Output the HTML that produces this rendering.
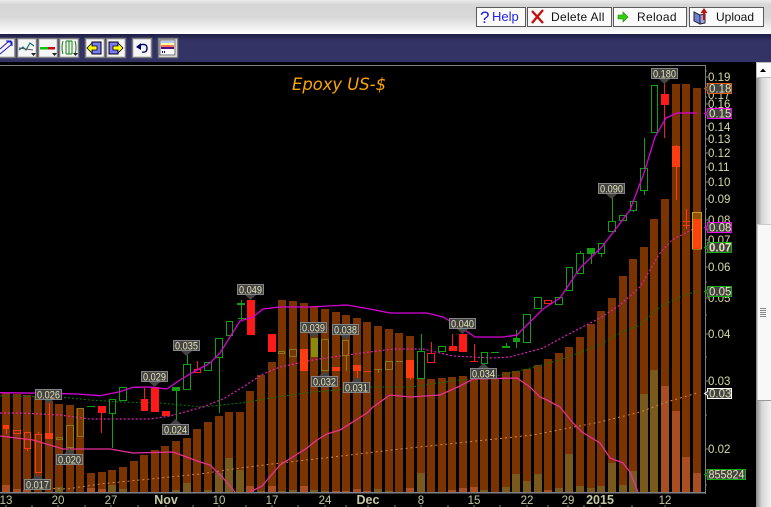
<!DOCTYPE html>
<html><head><meta charset="utf-8"><style>
html,body{margin:0;padding:0;background:#000;overflow:hidden}
svg{display:block}
text{font-family:"Liberation Sans",sans-serif}
.ax{font-size:11.500px;fill:#d8d8a4}
.dt{font-size:11.500px;fill:#c8c8a0;text-anchor:middle}
.db{font-size:12.500px;font-weight:bold;fill:#c8c8a0;text-anchor:middle}
.lb{font-size:11px;fill:#e4e4b8;text-anchor:middle}
.lbg{fill:#444;stroke:#858585;stroke-width:1}
.ptr{fill:#444}
.tg{fill:#444;stroke-width:1}
.tt{font-size:11.500px;fill:#e4e4b8}
.btn{font-size:12px;fill:#111}
.cr{shape-rendering:crispEdges}
</style></head><body>
<svg width="771" height="507" viewBox="0 0 771 507" xmlns="http://www.w3.org/2000/svg">
<defs>
<linearGradient id="top" x1="0" y1="0" x2="0" y2="1"><stop offset="0" stop-color="#ececec"/><stop offset=".14" stop-color="#d6d6d6"/><stop offset=".5" stop-color="#d8d8d8"/><stop offset="1" stop-color="#ffffff"/></linearGradient>
<linearGradient id="nav" x1="0" y1="0" x2="0" y2="1"><stop offset="0" stop-color="#1e1e44"/><stop offset=".25" stop-color="#333366"/><stop offset="1" stop-color="#333366"/></linearGradient>
<linearGradient id="trk" x1="0" y1="0" x2="1" y2="0"><stop offset="0" stop-color="#8a8a8a"/><stop offset=".4" stop-color="#d8d8d8"/><stop offset="1" stop-color="#f2f2f2"/></linearGradient>
</defs>
<rect width="771" height="507" fill="#000"/>
<rect width="771" height="34" fill="url(#top)"/>
<rect y="34" width="771" height="28" fill="url(#nav)"/>

<!-- top buttons -->
<g fill="#fbfbfb" stroke="#5a5a5a">
<rect x="476.500" y="7.500" width="49" height="19"/>
<rect x="527.500" y="7.500" width="84" height="19"/>
<rect x="613.500" y="7.500" width="73" height="19"/>
<rect x="689.500" y="7.500" width="74" height="19"/>
</g>
<text x="480" y="23" style="font-size:17px" fill="#1a1ae0">?</text>
<text x="492" y="21" style="font-size:13px" fill="#2222ee">Help</text>
<path d="M532 11L543 23M543 10L532 23" stroke="#c01010" stroke-width="2.400" fill="none"/>
<text x="551" y="21" class="btn" style="letter-spacing:.3px">Delete All</text>
<path d="M618 15h5v-3l5 5-5 5v-3h-5z" fill="#30d010" stroke="#208010" stroke-width=".6"/>
<text x="637" y="21" class="btn" style="letter-spacing:.3px">Reload</text>
<path d="M694 12l6 3v9l-6-3z" fill="#7080d0" stroke="#223" stroke-width="1"/><path d="M700 15l5-1v9l-5 1z" fill="#9aa4e0" stroke="#223" stroke-width="1"/>
<path d="M703 20v-7h-2.500l3.500-5 3.500 5H705v7z" fill="#c01010"/>
<text x="716" y="21" class="btn">Upload</text>

<!-- toolbar -->
<g fill="#f6f6f6" stroke="#7c7c7c" stroke-width="1.500">
<rect x="-4" y="38.500" width="19" height="19"/>
<rect x="17.500" y="38.500" width="19" height="19"/>
<rect x="38.500" y="38.500" width="19" height="19"/>
<rect x="59.500" y="38.500" width="19" height="19"/>
<rect x="85.500" y="38.500" width="19" height="19"/>
<rect x="106.500" y="38.500" width="19" height="19"/>
<rect x="132.500" y="38.500" width="19" height="19"/>
<rect x="158.500" y="38.500" width="19" height="19"/>
</g>
<path d="M0 49L9 41M6 41h5v4M0 54L12 44M8 42h4v4" stroke="#1818c0" fill="none"/>
<path d="M19 50l4-3 3 3 4-7 4 3" stroke="#1a7070" fill="none" stroke-width="1.200"/><path d="M19 48l14 2" stroke="#555" fill="none"/>
<path d="M31 53h5l-2.500 3z" fill="#222"/>
<rect x="40" y="47" width="8" height="2.500" fill="#10c010"/><rect x="48" y="47" width="7" height="2.500" fill="#c01010"/>
<path d="M52 53h5l-2.500 3z" fill="#222"/>
<path d="M63 41q-2 7 0 13M75 41q2 7 0 13M66 41v13M72 41v13M66 41h6M66 54h6M69 41v13" stroke="#128012" fill="none"/>
<path d="M73 53h5l-2.500 3z" fill="#222"/>
<rect x="92" y="42" width="9" height="12" fill="#7a7aff" stroke="#000"/>
<path d="M87 48l5-5v3h5v4h-5v3z" fill="#ffff00" stroke="#000" stroke-width=".8"/>
<rect x="109" y="42" width="9" height="12" fill="#7a7aff" stroke="#000"/>
<path d="M123 48l-5-5v3h-5v4h5v3z" fill="#ffff00" stroke="#000" stroke-width=".8"/>
<path d="M140 45q7-2 7 3t-5 4" stroke="#000066" stroke-width="1.400" fill="none"/><path d="M136 47l5-4v7z" fill="#000066"/>
<rect x="160" y="40" width="15" height="15" fill="#fff" stroke="#666"/>
<rect x="161" y="41" width="13" height="2" fill="#b8c8ff"/><rect x="161" y="43" width="13" height="2" fill="#ffffa0"/><rect x="161" y="45" width="13" height="2" fill="#ff7050"/><rect x="161" y="47" width="13" height="2" fill="#501080"/>
<rect x="162" y="51" width="1" height="2" fill="#00a"/><rect x="164" y="51" width="1" height="2" fill="#00a"/>

<!-- chart frame -->
<rect x="0" y="65" width="705" height="1" fill="#808080"/>

<!-- bars -->
<path fill="#7b3300" d="M2 393h8V492h-8zM13 394h8V492h-8zM23 395h8V492h-8zM34 396h8V492h-8zM45 401h8V492h-8zM55 404h8V492h-8zM66 405h8V492h-8zM76 408h8V492h-8zM87 473h8V492h-8zM98 472h8V492h-8zM108 470h8V492h-8zM119 467h8V492h-8zM130 461h8V492h-8zM140 455h8V492h-8zM151 450h8V492h-8zM161 446h8V492h-8zM172 441h8V492h-8zM183 438h8V492h-8zM193 429h8V492h-8zM204 422h8V492h-8zM215 416h8V492h-8zM225 412h8V492h-8zM236 412h8V492h-8zM246 391h8V492h-8zM257 375h8V492h-8zM268 362h8V492h-8zM278 300h8V492h-8zM289 301h8V492h-8zM300 303h8V492h-8zM310 306h8V492h-8zM321 309h8V492h-8zM332 312h8V492h-8zM342 315h8V492h-8zM353 318h8V492h-8zM363 322h8V492h-8zM374 326h8V492h-8zM385 329h8V492h-8zM395 333h8V492h-8zM406 336h8V492h-8zM417 379h8V492h-8zM427 379h8V492h-8zM438 378h8V492h-8zM448 377h8V492h-8zM459 376h8V492h-8zM470 378h8V492h-8zM480 378h8V492h-8zM491 378h8V492h-8zM502 372h8V492h-8zM512 371h8V492h-8zM523 369h8V492h-8zM534 365h8V492h-8zM544 359h8V492h-8zM555 353h8V492h-8zM565 347h8V492h-8zM576 337h8V492h-8zM587 324h8V492h-8zM597 311h8V492h-8zM608 298h8V492h-8zM619 276h8V492h-8zM629 259h8V492h-8zM640 247h8V492h-8zM650 219h8V492h-8zM661 199h8V492h-8zM672 84h8V492h-8zM682 84h8V492h-8zM693 88h8V492h-8z"/>
<!-- volume olive -->
<path fill="#7a5a1c" d="M55 487h8V492h-8zM108 485h8V492h-8zM119 489h8V492h-8zM172 490h8V492h-8zM183 483h8V492h-8zM204 490h8V492h-8zM215 473h8V492h-8zM225 458h8V492h-8zM236 470h8V492h-8zM257 491h8V492h-8zM278 491h8V492h-8zM289 490h8V492h-8zM310 490h8V492h-8zM321 491h8V492h-8zM374 489h8V492h-8zM385 491h8V492h-8zM417 473h8V492h-8zM480 490h8V492h-8zM502 487h8V492h-8zM512 474h8V492h-8zM523 481h8V492h-8zM534 474h8V492h-8zM555 488h8V492h-8zM565 454h8V492h-8zM576 486h8V492h-8zM587 488h8V492h-8zM597 486h8V492h-8zM608 463h8V492h-8zM619 485h8V492h-8zM629 471h8V492h-8zM640 394h8V492h-8zM650 370h8V492h-8z"/>
<!-- volume orange -->
<path fill="#a84e20" d="M2 485h8V492h-8zM13 489h8V492h-8zM23 490h8V492h-8zM87 488h8V492h-8zM98 489h8V492h-8zM246 486h8V492h-8zM268 486h8V492h-8zM300 486h8V492h-8zM332 491h8V492h-8zM342 491h8V492h-8zM353 489h8V492h-8zM363 491h8V492h-8zM406 488h8V492h-8zM448 490h8V492h-8zM459 488h8V492h-8zM470 487h8V492h-8zM544 490h8V492h-8zM661 386h8V492h-8zM672 411h8V492h-8zM682 457h8V492h-8zM693 473h8V492h-8z"/>

<!-- moving averages -->
<polyline fill="none" stroke="#0a7a0a" stroke-width="1" stroke-dasharray="2 2" points="0,396 60,397 90,400 120,402 160,403 203,407 240,403 277,397 313,392 347,389 370,387 410,387 460,380 493,377 527,369 560,360 600,345 620,333 640,325 660,307 680,297 697,291"/>
<polyline fill="none" stroke="#cc8a5a" stroke-width="1" stroke-dasharray="2 3" points="43,488 67,489 100,484 150,479 200,474 233,469 280,463 333,457 400,449 467,442 533,435 600,422 640,412 667,402 697,393"/>
<polyline fill="none" stroke="#e020c0" stroke-width="1.200" stroke-dasharray="2 2" points="0,413 20,413 60,415 90,419 150,419 170,416 203,407 223,399 243,387 263,374 280,367 313,360 347,355 370,352 393,349 423,349 453,356 493,358 510,357 543,348 567,335 600,318 620,305 640,287 660,253 672,240 697,227"/>
<polyline fill="none" stroke="#e8309c" stroke-width="1.300" points="0,436 33,440 63,449 110,449 133,453 173,452 200,462 210,465 223,478 235,492"/>
<polyline fill="none" stroke="#e8309c" stroke-width="1.300" points="250,492 262,486 280,465 307,448 317,440 327,434 340,430 367,413 373,407 390,395 410,397 440,395 460,386 473,379 517,378 530,387 540,397 547,400 560,407 573,423 582,432 600,443 610,458 623,463 630,472 638,492"/>

<!-- candles hollow red/orange -->
<g class="cr" fill="none" stroke="#ff3c10" stroke-width="1">
<rect x="13.500" y="430.500" width="7" height="3"/>
<rect x="24.500" y="432.500" width="6" height="16"/>
<path d="M27.500 449v2"/>
<rect x="35.500" y="434.500" width="6" height="38"/>
<path d="M38.500 432v2"/>
<path d="M686.500 209v20M683 221.500h7M683 225.500h7"/>
<path d="M364 371.500h7"/>
</g>
<g class="cr" fill="none" stroke="#ff1a1a" stroke-width="1">
<rect x="194.500" y="369.500" width="6" height="3"/><path d="M197.500 361v8"/>
<rect x="427.500" y="353.500" width="7" height="9"/><path d="M431.500 342v11"/>
<path d="M474.500 344v17M470 361.500h8"/>
<rect x="544.500" y="300.500" width="7" height="3"/>
</g>
<!-- filled red -->
<path class="cr" fill="#ff1a1a" d="M98 406h8v7h-8zM141 399h7v12h-7zM151 387h8v25h-8zM162 411h8v5h-8zM247 300h8v35h-8zM268 334h8v18h-8zM449 346h8v5h-8zM459 334h8v18h-8zM661 94h8v11h-8z"/>
<path class="cr" fill="none" stroke="#ff1a1a" d="M101.500 413v20M144.500 388v11M452.500 334v12M664.500 80v58"/>
<!-- filled orange -->
<path class="cr" fill="#ff3c10" d="M3 425h6v4h-6zM45 433h8v6h-8zM300 349h8v22h-8zM332 367h8v4h-8zM353 365h8v6h-8zM406 360h8v18h-8zM672 146h8v21h-8z"/>
<path class="cr" fill="none" stroke="#ff3c10" d="M6.500 429v5M49.500 399v34M357.500 371v9M410.500 378v2M676.500 145v55"/>
<!-- olive -->
<g class="cr" fill="none" stroke="#8a7a10" stroke-width="1">
<rect x="56.500" y="437.500" width="6" height="2"/>
<rect x="66.500" y="425.500" width="7" height="22"/><path d="M70.500 448v2"/>
<rect x="77.500" y="408.500" width="6" height="28"/>
<rect x="278.500" y="351.500" width="6" height="2"/>
<rect x="289.500" y="349.500" width="7" height="7"/>
<rect x="321.500" y="339.500" width="7" height="31"/>
<rect x="342.500" y="340.500" width="6" height="15"/><path d="M346.500 356v15"/>
<path d="M374 369.500h8M378.500 369v4"/>
<rect x="385.500" y="361.500" width="7" height="8"/>
<path d="M396 361.500h7"/>
</g>
<rect x="311" y="338" width="7" height="19" fill="#8a8a0c"/>
<!-- green hollow -->
<g class="cr" fill="none" stroke="#10a010" stroke-width="1">
<rect x="109.500" y="399.500" width="6" height="14"/><path d="M112.500 414v34"/>
<rect x="119.500" y="387.500" width="7" height="13"/>
<rect x="183.500" y="364.500" width="7" height="25"/><path d="M187.500 355v9"/>
<rect x="204.500" y="362.500" width="7" height="8"/>
<rect x="215.500" y="338.500" width="7" height="19"/><path d="M219.500 358v55"/>
<rect x="226.500" y="321.500" width="6" height="14"/>
<rect x="417.500" y="351.500" width="7" height="27"/><path d="M421.500 334v17"/>
<rect x="438.500" y="346.500" width="7" height="5"/>
<rect x="481.500" y="352.500" width="6" height="11"/>
<rect x="523.500" y="314.500" width="7" height="28"/>
<rect x="534.500" y="297.500" width="7" height="11"/>
<rect x="555.500" y="297.500" width="7" height="7"/>
<rect x="566.500" y="267.500" width="6" height="23"/>
<rect x="576.500" y="253.500" width="7" height="20"/><path d="M580.500 251v2"/>
<rect x="598.500" y="243.500" width="6" height="10"/><path d="M601.500 254v3"/>
<rect x="608.500" y="221.500" width="7" height="10"/><path d="M612.500 197v24"/>
<rect x="619.500" y="215.500" width="7" height="5"/>
<rect x="630.500" y="201.500" width="6" height="9"/><path d="M633.500 211v1"/>
<rect x="640.500" y="168.500" width="7" height="22"/><path d="M644.500 138v30M644.500 191v4"/>
<rect x="651.500" y="85.500" width="6" height="47"/>
<path d="M87 406.500h8M491 352.500h8M238 318.500h8"/>
</g>
<path class="cr" fill="#10a010" d="M172 387h8v4h-8zM237 303h8v2h-8zM502 346h8v2h-8zM513 338h7v4h-7zM587 248h8v6h-8z"/>
<path class="cr" fill="none" stroke="#10a010" d="M176.500 391v29M241.500 300v21M506.500 343v3M516.500 330v18M591.500 254v10"/>
<!-- highlight last candle -->
<rect x="692.500" y="212.500" width="9" height="36.500" fill="#c8a020" fill-opacity=".28" stroke="#c8a020"/>
<rect x="693" y="219" width="8" height="30" fill="#ff4010"/>

<!-- upper magenta -->
<polyline fill="none" stroke="#d800d8" stroke-width="1.300" points="0,392.700 50,393.300 77,394 100,395.700 120,391.700 133,387.300 150,387 167,389 180,380 190,374 210,363 220,353 230,337 240,321 253,317 263,309 280,307 310,307 347,305 370,309 390,313 427,313 443,317 463,329 475,337 503,337 517,335 530,322 543,309 560,298 580,268 602,247 630,210 644,173 655,137 666,118 677,113 697,113"/>

<!-- callouts -->
<g>
<path class="ptr" d="M43 399l5.500 5 5.500-5zM32 479l5.500-5 5.500 5zM64 454l5.500-6 5.500 6zM149 382l5.500 5 5.500-5zM170 424l5.500-5 5.500 5zM181 351l5.500 5 5.500-5zM245 295l5.500 5 5.500-5zM308 333l5.500 5 5.500-5zM340 335l5.500 5 5.500-5zM319 376l5.500-5 5.500 5zM351 382l5.500-5 5.500 5zM457 329l5.500 5 5.500-5zM478 368l5.500-5 5.500 5zM606 194l5.500 5 5.500-5zM659 79l5.500 5 5.500-5z"/>
<rect class="lbg" x="35.500" y="389.500" width="26" height="10"/><text class="lb" x="48.500" y="398.500" textLength="23" lengthAdjust="spacingAndGlyphs">0.026</text>
<rect class="lbg" x="24.500" y="479.500" width="26" height="10"/><text class="lb" x="37.500" y="488.500" textLength="23" lengthAdjust="spacingAndGlyphs">0.017</text>
<rect class="lbg" x="56.500" y="454.500" width="26" height="10"/><text class="lb" x="69.500" y="463.500" textLength="23" lengthAdjust="spacingAndGlyphs">0.020</text>
<rect class="lbg" x="141.500" y="371.500" width="26" height="10"/><text class="lb" x="154.500" y="380.500" textLength="23" lengthAdjust="spacingAndGlyphs">0.029</text>
<rect class="lbg" x="162.500" y="424.500" width="26" height="10"/><text class="lb" x="175.500" y="433.500" textLength="23" lengthAdjust="spacingAndGlyphs">0.024</text>
<rect class="lbg" x="173.500" y="340.500" width="26" height="10"/><text class="lb" x="186.500" y="349.500" textLength="23" lengthAdjust="spacingAndGlyphs">0.035</text>
<rect class="lbg" x="237.500" y="284.500" width="26" height="10"/><text class="lb" x="250.500" y="293.500" textLength="23" lengthAdjust="spacingAndGlyphs">0.049</text>
<rect class="lbg" x="300.500" y="322.500" width="26" height="10"/><text class="lb" x="313.500" y="331.500" textLength="23" lengthAdjust="spacingAndGlyphs">0.039</text>
<rect class="lbg" x="332.500" y="324.500" width="26" height="10"/><text class="lb" x="345.500" y="333.500" textLength="23" lengthAdjust="spacingAndGlyphs">0.038</text>
<rect class="lbg" x="311.500" y="376.500" width="26" height="10"/><text class="lb" x="324.500" y="385.500" textLength="23" lengthAdjust="spacingAndGlyphs">0.032</text>
<rect class="lbg" x="343.500" y="382.500" width="26" height="10"/><text class="lb" x="356.500" y="391.500" textLength="23" lengthAdjust="spacingAndGlyphs">0.031</text>
<rect class="lbg" x="449.500" y="318.500" width="26" height="10"/><text class="lb" x="462.500" y="327.500" textLength="23" lengthAdjust="spacingAndGlyphs">0.040</text>
<rect class="lbg" x="470.500" y="368.500" width="26" height="10"/><text class="lb" x="483.500" y="377.500" textLength="23" lengthAdjust="spacingAndGlyphs">0.034</text>
<rect class="lbg" x="598.500" y="183.500" width="26" height="10"/><text class="lb" x="611.500" y="192.500" textLength="23" lengthAdjust="spacingAndGlyphs">0.090</text>
<rect class="lbg" x="651.500" y="68.500" width="26" height="10"/><text class="lb" x="664.500" y="77.500" textLength="23" lengthAdjust="spacingAndGlyphs">0.180</text>
</g>

<text x="292" y="90" style="font-family:'DejaVu Sans',sans-serif;font-style:oblique;font-size:17px" fill="#ffa500" textLength="94" lengthAdjust="spacingAndGlyphs">Epoxy US-$</text>

<!-- axes -->
<rect x="705" y="65" width="1" height="429" fill="#808080"/>
<rect x="0" y="492" width="706" height="1.500" fill="#808080"/>
<path stroke="#808080" fill="none" d="M705 77h3M705 90h3M705 104h3M705 126h3M705 139h3M705 153h3M705 167h3M705 182h3M705 199h3M705 220h3M705 240h3M705 267h3M705 298h3M705 334h3M705 381h3M705 449h3M705 71h2M705 84h2M705 97h2M705 115h2M705 132h2M705 146h2M705 160h2M705 174h2M705 190h2M705 209h2M705 230h2M705 253h2M705 282h2M705 315h2M705 357h2M705 415h2M705 470h2M705 485h2"/>
<path stroke="#808080" fill="none" d="M6 505v2M58 505v2M111 505v2M166 505v2M219 505v2M272 505v2M325 505v2M368 505v2M421 505v2M474 505v2M527 505v2M568 505v2M600 505v2M665 505v2M32 505v2M85 505v2M138 505v2M193 505v2M246 505v2M298 505v2M346 505v2M395 505v2M448 505v2M500 505v2M548 505v2M584 505v2M632 505v2"/>
<g class="ax">
<text class="ax" x="708" y="81">0.19</text><text class="ax" x="708" y="99">0.17</text><text class="ax" x="708" y="108">0.16</text><text class="ax" x="708" y="131">0.14</text><text class="ax" x="708" y="143">0.13</text><text class="ax" x="708" y="157">0.12</text><text class="ax" x="708" y="171">0.11</text><text class="ax" x="708" y="186">0.10</text><text class="ax" x="708" y="203">0.09</text><text class="ax" x="708" y="224">0.08</text><text class="ax" x="708" y="244">0.07</text><text class="ax" x="708" y="271">0.06</text><text class="ax" x="708" y="302">0.05</text><text class="ax" x="708" y="338">0.04</text><text class="ax" x="708" y="385">0.03</text><text class="ax" x="708" y="453">0.02</text>
</g>
<!-- tags -->
<path class="tg" stroke="#e06010" d="M707.500 83.500h24v10h-24v-3l-3-2 3-2z"/><text class="tt" x="709" y="92.500">0.18</text>
<path class="tg" stroke="#f000f0" d="M707.500 108.500h24v10h-24v-3l-3-2 3-2z"/><text class="tt" x="709" y="117.500">0.15</text>
<path class="tg" stroke="#f000f0" d="M707.500 222.500h24v10h-24v-3l-3-2 3-2z"/><text class="tt" x="709" y="231.500">0.08</text>
<path class="tg" stroke="#10b010" d="M707.500 242.500h24v10h-24v-3l-3-2 3-2z"/><text class="tt" x="709" y="251.500" font-weight="bold">0.07</text>
<path class="tg" stroke="#10b010" d="M707.500 286.500h24v10h-24v-3l-3-2 3-2z"/><text class="tt" x="709" y="295.500">0.05</text>
<path class="tg" stroke="#ffffff" d="M707.500 388.500h24v10h-24v-3l-3-2 3-2z"/><text class="tt" x="709" y="397.500">0.03</text>
<path class="tg" stroke="#10b010" d="M707.500 469.500h38v10h-38v-3l-3-2 3-2z"/><text class="tt" x="708.500" y="478.500" textLength="36" lengthAdjust="spacingAndGlyphs">855824</text>

<!-- dates -->
<text class="dt" x="6" y="504">13</text><text class="dt" x="58" y="504">20</text><text class="dt" x="111" y="504">27</text><text class="db" x="166" y="504">Nov</text>
<text class="dt" x="219" y="504">10</text><text class="dt" x="272" y="504">17</text><text class="dt" x="325" y="504">24</text><text class="db" x="368" y="504">Dec</text>
<text class="dt" x="421" y="504">8</text><text class="dt" x="474" y="504">15</text><text class="dt" x="527" y="504">22</text><text class="dt" x="568" y="504">29</text><text class="db" x="600" y="504">2015</text><text class="dt" x="665" y="504">12</text>

<!-- scrollbar -->
<rect x="756" y="62" width="15" height="445" fill="url(#trk)"/>
<rect x="756.500" y="62.500" width="15" height="15" fill="#fbfbfb" stroke="#bbb"/>
<path d="M760 72h6l-3-3.500z" fill="#000"/>
<rect x="757" y="224" width="14" height="176" fill="#f8f8f8"/>
<path d="M757.500 400V224.500H771" stroke="#ccc" fill="none"/><path d="M757 400.500h14" stroke="#999"/>
<path d="M760 308.500h6M760 310.500h6M760 312.500h6M760 314.500h6M760 316.500h6" stroke="#888"/>
</svg>
</body></html>
